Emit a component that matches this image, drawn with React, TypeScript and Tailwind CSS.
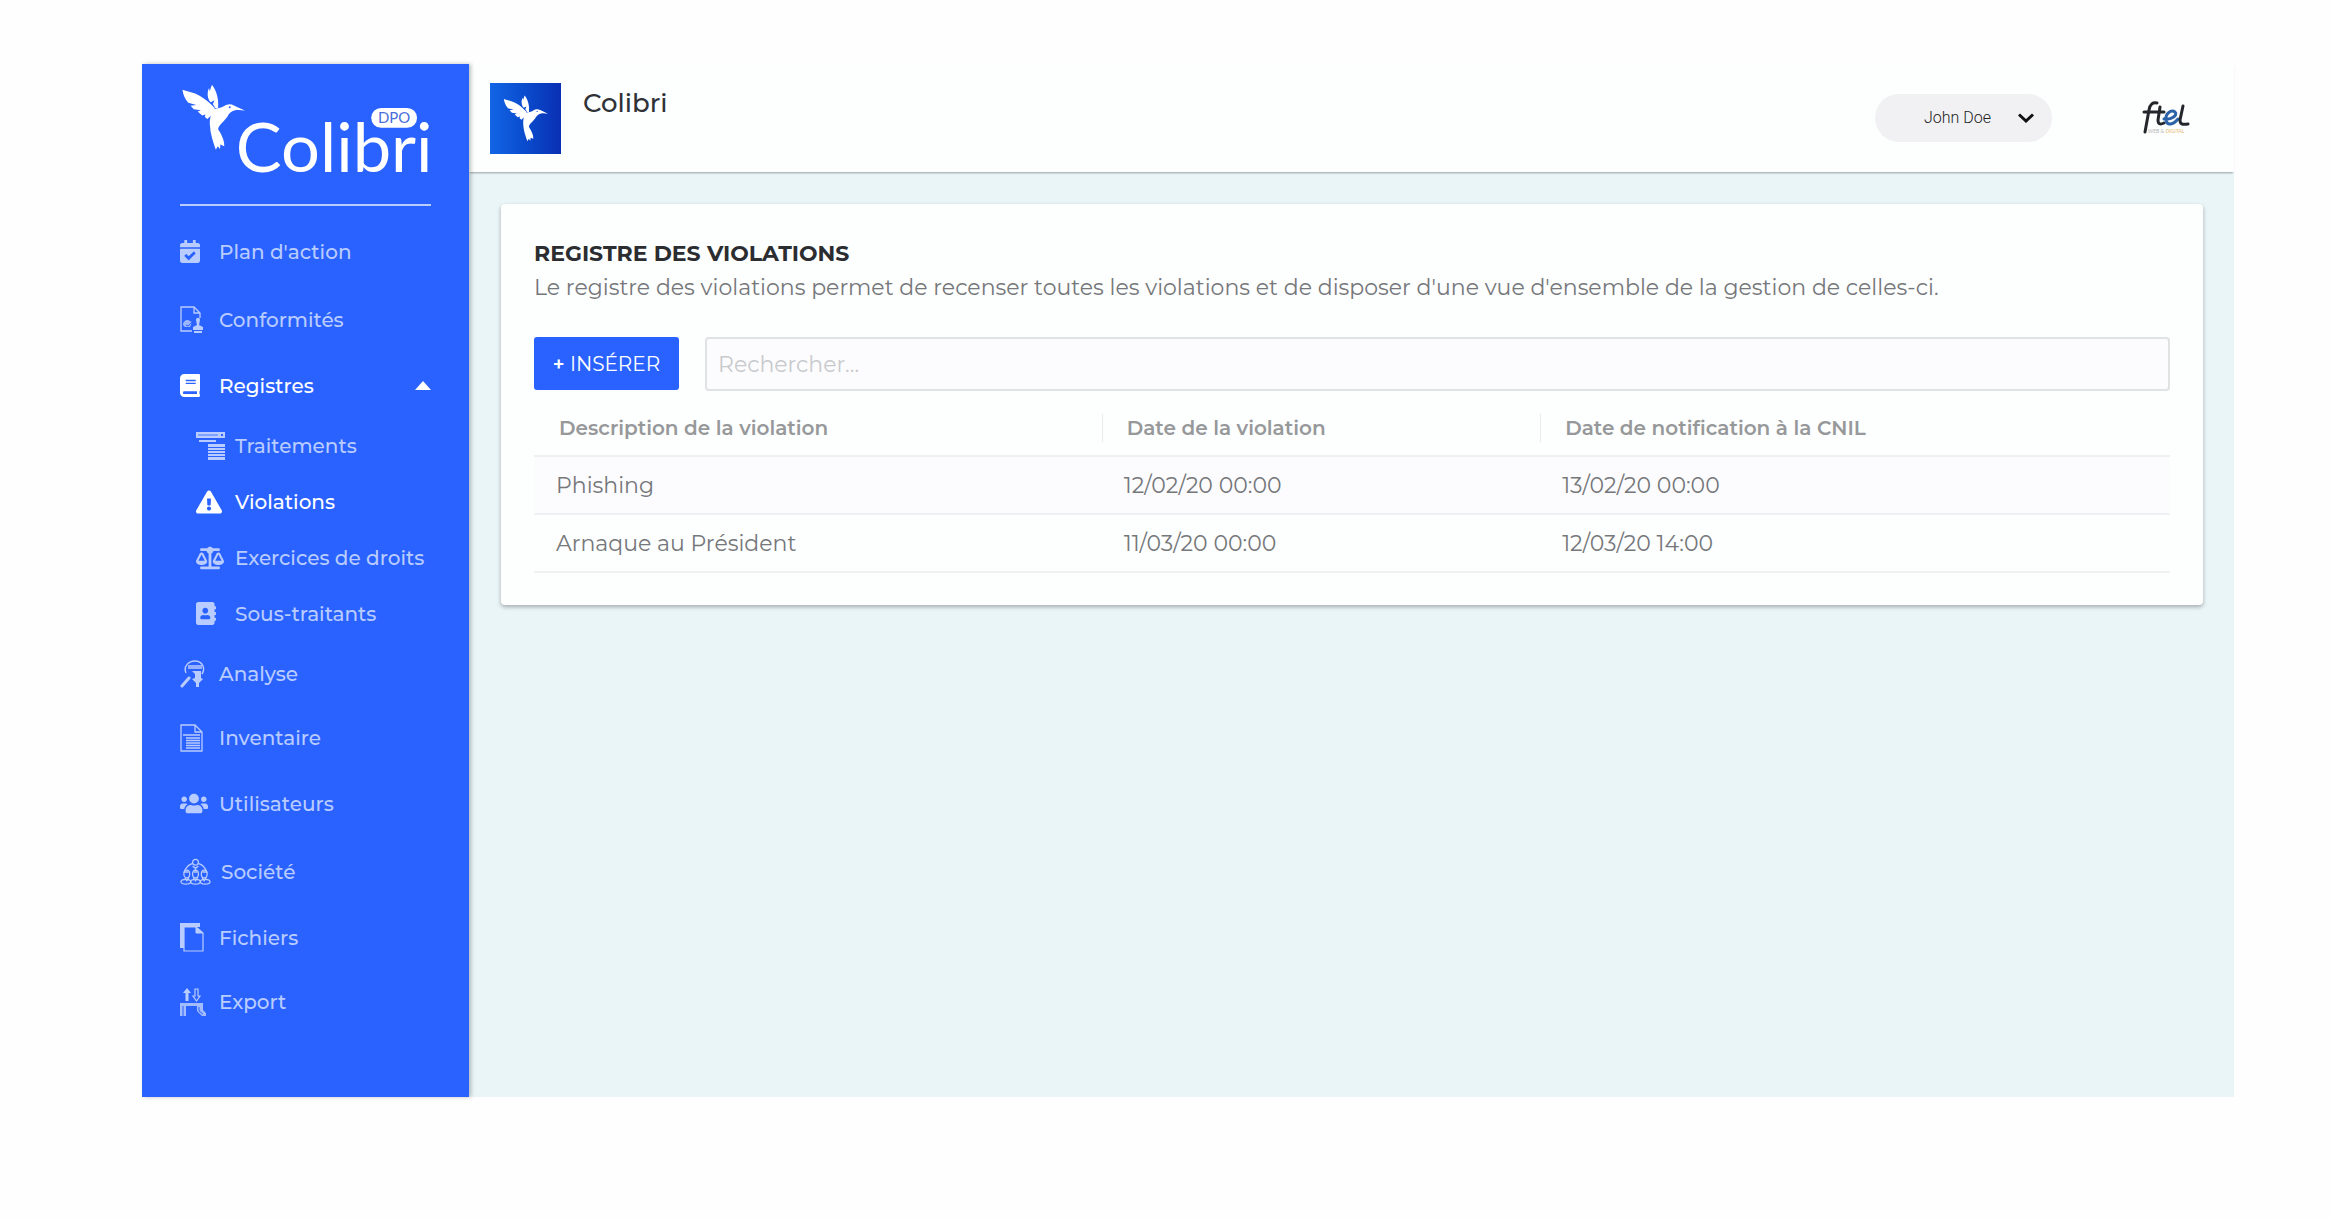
import React, { useState } from 'react';
import {
  FaCalendarCheck,
  FaBook,
  FaExclamationTriangle,
  FaBalanceScale,
  FaAddressBook,
  FaUsers,
} from 'react-icons/fa';

interface Violation {
  id: number;
  description: string;
  date: string;
  notification: string;
}

interface NavItem {
  label: string;
  icon: React.ReactNode;
  height: string;
  active?: boolean;
}

const violations: Violation[] = [
  { id: 1, description: 'Phishing', date: '12/02/20 00:00', notification: '13/02/20 00:00' },
  { id: 2, description: 'Arnaque au Président', date: '11/03/20 00:00', notification: '12/03/20 14:00' },
];

const Bird = ({ className, ...rest }: React.SVGProps<SVGSVGElement>) => (
  <svg viewBox="26 16 196 206" className={className} fill="#fff" aria-hidden="true" {...rest}>
    <path d="M27 34C44 40 62 42 80 52C98 62 114 76 127 91L119 110L104 124L96 118L98 110L88 113L74 101L84 97L62 94L52 83L70 81L45 74C34 62 29 48 27 34Z" />
    <path d="M118 18C132 34 140 64 137 90L129 91L121 78L126 66L114 72C104 62 102 42 109 28L111 38Z" />
    <path d="M220 98C208 92 196 87 186 82C176 76 164 78 156 84C146 91 134 90 125 94C114 108 110 126 112 146C113 170 122 196 130 219L136 208L143 217L144 203L156 208C157 192 148 172 137 156C138 142 156 132 166 116C171 105 180 99 190 97C200 95 210 97 220 98Z" />
    <circle cx="173" cy="88" r="3" fill="#2962ff" />
  </svg>
);

const Logo = () => (
  <svg viewBox="0 0 252 92" className="w-full overflow-visible" role="img" aria-label="Colibri DPO">
    <Bird x="1" y="0" width="66" height="67" />
    <text x="56" y="88" fontFamily="Lato, sans-serif" fontSize="69" fill="#fff">Colibri</text>
    <rect x="190" y="22" width="50" height="24" rx="12" fill="#2962ff" />
    <rect x="192" y="24" width="46" height="20" rx="10" fill="#fff" />
    <text x="215" y="39" textAnchor="middle" fontFamily="Lato, sans-serif" fontSize="15" fill="#4a6fdc">DPO</text>
  </svg>
);

const FtelLogo = () => (
  <svg viewBox="0 0 48 34" className="h-[34px] w-12" role="img" aria-label="ftel">
    <g fill="none" strokeLinecap="round" strokeLinejoin="round" strokeWidth="3">
      <path d="M3 31L7 9C8 3 11 1 15 2M2 11H22M18 6L16 19C16 23 18 24 22 22" stroke="#23262b" />
      <path d="M22 18C30 19 36 14 33 11C29 8 23 13 24 19C25 25 31 24 36 18" stroke="#2b62a8" />
      <path d="M41 5L38 19C38 23 40 24 46 23" stroke="#23262b" />
    </g>
    <text x="6" y="32" fontFamily="Lato, sans-serif" fontSize="5" fill="#b5b5b5">WEB &amp; <tspan fill="#e5b76a">DIGITAL</tspan></text>
  </svg>
);

const ConformitesIcon = () => (
  <svg viewBox="0 0 23 28" className="h-7 w-[23px]" fill="none" stroke="currentColor">
    <path d="M12 25H1V1H14L20 7V12M14 1V7H20" strokeWidth="1.3" />
    <path d="M3 19C3 16 5 14 8 14L12 16L10 21H5Z" fill="currentColor" stroke="none" opacity="0.8" />
    <path d="M6 19L8 20L12 16" strokeWidth="1" stroke="#2962ff" />
    <path d="M16 14C16 11 20 11 20 14L19 19L23 21V24H13V21L17 19ZM14 25H22V27H14Z" fill="currentColor" stroke="none" />
  </svg>
);

const TraitementsIcon = () => (
  <svg viewBox="0 0 29 28" className="h-7 w-[29px]" fill="currentColor">
    <path fillRule="evenodd" d="M0 0H29V6H0ZM2 2V4H22V2ZM25 2V4H27V2Z" />
    <path d="M2 2H22V4H2Z" opacity="0.6" />
    <path d="M3 8H20V10H3ZM12 12H29V15H12ZM12 16H29V18H12ZM12 19H29V21H12ZM12 22H29V24H12ZM12 25H29V28H12Z" />
  </svg>
);

const AnalyseIcon = () => (
  <svg viewBox="0 0 25 28" className="h-7 w-[25px]" fill="none" stroke="currentColor">
    <path d="M6 13C3 6 9 1 15 1C22 1 26 8 22 14" strokeWidth="1.4" />
    <path d="M8 6H22M8 8H22" strokeWidth="1.6" />
    <path d="M12 11H21V18L23 19L19 23V27H16V23L12 19L15 18V14Z" fill="currentColor" stroke="none" />
    <path d="M9 18L2 26" strokeWidth="3" strokeLinecap="round" />
  </svg>
);

const InventaireIcon = () => (
  <svg viewBox="0 0 23 28" className="h-7 w-[23px]" fill="none" stroke="currentColor">
    <path d="M1 1H15L22 8V27H1ZM15 1V8H22" strokeWidth="1.3" />
    <path d="M3 11H20M6 14H20M6 16.500H20M6 19H20M6 21.500H20M6 24H20" strokeWidth="1.7" />
  </svg>
);

const SocieteIcon = () => (
  <svg viewBox="0 0 32 28" className="h-7 w-[31px]" fill="none" stroke="currentColor" strokeWidth="1.3">
    <circle cx="16" cy="4" r="3" />
    <path d="M13 5C7 7 5 11 4 15M19 5C25 7 27 11 28 15M13 8L16 10L19 8" />
    <ellipse cx="7" cy="16" rx="3" ry="4" />
    <ellipse cx="16" cy="16" rx="3" ry="4" />
    <ellipse cx="25" cy="16" rx="3" ry="4" />
    <path d="M5 14H9M14 14H18M23 14H27M16 10V13M5 20L7 23L9 20M14 20L16 23L18 20M23 20L25 23L27 20" />
    <ellipse cx="6" cy="24" rx="5" ry="2.500" />
    <ellipse cx="16" cy="24" rx="5" ry="2.500" />
    <ellipse cx="26" cy="24" rx="5" ry="2.500" />
  </svg>
);

const FichiersIcon = () => (
  <svg viewBox="0 0 24 29" className="h-[29px] w-6" fill="none" stroke="currentColor">
    <path d="M0 0H20V4H4V25H0Z" fill="currentColor" stroke="none" />
    <path d="M4 4H16L23 10V28H4Z" strokeWidth="1.2" />
    <path d="M16 4V10H23Z" fill="currentColor" strokeWidth="1" />
  </svg>
);

const ExportIcon = () => (
  <svg viewBox="0 0 26 28" className="h-7 w-[26px]" fill="currentColor">
    <path d="M7 0L11 5H8.500V13H5.500V5H3Z" />
    <path d="M15 1H18V8H20L16.500 13L13 8H15Z" fill="none" stroke="currentColor" strokeWidth="1.200" />
    <path d="M0 15H23V22L26 25V28H22L17 23V18H6V28H0Z" opacity="0.85" />
    <path d="M3 18V28M19 19V23L23 26" stroke="#2962ff" strokeWidth="1" fill="none" />
  </svg>
);

const mainItems: NavItem[] = [
  { label: "Plan d'action", icon: <FaCalendarCheck className="h-[23px] w-5" />, height: 'h-[68px]' },
  { label: 'Conformités', icon: <ConformitesIcon />, height: 'h-[68px]' },
];

const registreItems: NavItem[] = [
  { label: 'Traitements', icon: <TraitementsIcon />, height: 'h-14' },
  { label: 'Violations', icon: <FaExclamationTriangle className="h-6 w-[26px]" />, height: 'h-14', active: true },
  { label: 'Exercices de droits', icon: <FaBalanceScale className="h-6 w-7" />, height: 'h-14' },
  { label: 'Sous-traitants', icon: <FaAddressBook className="h-[23px] w-5" />, height: 'h-14' },
];

const otherItems: NavItem[] = [
  { label: 'Analyse', icon: <AnalyseIcon />, height: 'h-16' },
  { label: 'Inventaire', icon: <InventaireIcon />, height: 'h-16' },
  { label: 'Utilisateurs', icon: <FaUsers className="h-[23px] w-7" />, height: 'h-[68px]' },
  { label: 'Société', icon: <SocieteIcon />, height: 'h-[68px]' },
  { label: 'Fichiers', icon: <FichiersIcon />, height: 'h-16' },
  { label: 'Export', icon: <ExportIcon />, height: 'h-16' },
];

const NavLink = ({ item }: { item: NavItem }) => (
  <li>
    <a
      href="#"
      className={`flex items-center whitespace-nowrap ${item.height} ${item.active ? 'text-white' : 'text-[#b9ccff] hover:text-white'}`}
    >
      <span className="flex min-w-[39px] shrink-0 pr-[10px]">{item.icon}</span>
      <span>{item.label}</span>
    </a>
  </li>
);

const Sidebar = () => {
  const [open, setOpen] = useState(true);

  return (
    <aside className="z-10 w-[327px] shrink-0 bg-[#2962ff] pr-[38px] pl-[38px] pt-5 shadow-[2px_0_4px_rgba(0,0,0,0.25)]">
      <Logo />
      <hr className="mt-7 border-t-2 border-[#b9ccff]" />
      <nav className="mt-3 text-[20px] font-medium">
        <ul>
          {mainItems.map((item) => (
            <NavLink key={item.label} item={item} />
          ))}
          <li>
            <button
              type="button"
              aria-expanded={open}
              onClick={() => setOpen(!open)}
              className="flex h-16 w-full items-center text-white"
            >
              <span className="flex min-w-[39px] shrink-0 pr-[10px]">
                <FaBook className="h-[23px] w-5" />
              </span>
              <span>Registres</span>
              <svg viewBox="0 0 16 9" className={`ml-auto h-[9px] w-4 ${open ? '' : 'rotate-180'}`} fill="currentColor">
                <path d="M8 0L16 9H0Z" />
              </svg>
            </button>
            {open && (
              <ul className="pl-4">
                {registreItems.map((item) => (
                  <NavLink key={item.label} item={item} />
                ))}
              </ul>
            )}
          </li>
          {otherItems.map((item) => (
            <NavLink key={item.label} item={item} />
          ))}
        </ul>
      </nav>
    </aside>
  );
};

const Header = () => (
  <header className="flex h-[108px] items-center bg-[#fdfefe] pr-11 pl-[21px] shadow-[0_2px_2px_-1px_rgba(0,0,0,0.35)]">
    <div className="flex h-[71px] w-[71px] items-center justify-center bg-linear-to-r from-[#1265e6] to-[#0a2fb4]">
      <Bird className="h-[47px] w-[46px]" />
    </div>
    <h1 className="mb-[30px] ml-[22px] text-[26px] leading-9 font-medium text-[#2f3237]">Colibri</h1>
    <div className="relative ml-auto">
      <select
        aria-label="Utilisateur"
        className="h-12 w-[177px] appearance-none rounded-full bg-[#f1f1f4] pl-[49px] font-[Roboto] text-[16px] font-light text-[#222]"
      >
        <option>John Doe</option>
      </select>
      <svg viewBox="0 0 16 10" className="pointer-events-none absolute top-[19px] right-[18px] h-[10px] w-4" fill="none" stroke="#111" strokeWidth="3">
        <path d="M1 1.500L8 8L15 1.500" />
      </svg>
    </div>
    <div className="ml-[90px]">
      <FtelLogo />
    </div>
  </header>
);

export default function App() {
  const [search, setSearch] = useState('');

  const rows = violations.filter((v) => v.description.toLowerCase().includes(search.toLowerCase()));

  return (
    <div className="flex min-h-screen bg-[#fefefe] pt-16 pr-24 pb-[124px] pl-[142px] font-[Montserrat,Inter,sans-serif]">
      <Sidebar />
      <div className="flex min-w-0 flex-1 flex-col bg-[#eaf5f8]">
        <Header />
        <main className="px-8 pt-8 pr-[31px]">
          <section className="rounded-[4px] bg-[#fdfefe] p-[33px] pb-8 shadow-[0_2px_4px_rgba(0,0,0,0.3)]">
            <h2 className="text-[22px] leading-[34px] font-bold text-[#2b2d31]">REGISTRE DES VIOLATIONS</h2>
            <p className="text-[22px] leading-[34px] text-[#75777a]">
              Le registre des violations permet de recenser toutes les violations et de disposer d'une vue d'ensemble de la gestion de celles-ci.
            </p>

            <div className="mt-8 flex gap-[26px]">
              <button
                type="button"
                className="h-[53px] w-[145px] shrink-0 rounded-[3px] bg-[#2962ff] text-[20px] text-white hover:bg-[#1e54e6]"
              >
                <span className="font-semibold">+</span> INSÉRER
              </button>
              <input
                type="text"
                aria-label="Rechercher"
                placeholder="Rechercher..."
                value={search}
                onChange={(e) => setSearch(e.target.value)}
                className="h-[54px] min-w-0 flex-1 rounded-[4px] border-2 border-[#e0e2e4] bg-[#fcfcfe] px-[11px] text-[22px] text-[#75777a] outline-none placeholder:text-[#c8cacc]"
              />
            </div>

            <table className="mt-[9px] w-full table-fixed text-left">
              <thead className="text-[20px] leading-7 text-[#96989a]">
                <tr className="border-b-2 border-[#eef0f2]">
                  <th className="h-14 w-[34.7%] px-[25px] font-semibold">Description de la violation</th>
                  <th className="w-[26.8%] font-semibold">
                    <div className="border-l border-[#e9ebee] pl-6">Date de la violation</div>
                  </th>
                  <th className="font-semibold">
                    <div className="border-l border-[#e9ebee] pl-6">Date de notification à la CNIL</div>
                  </th>
                </tr>
              </thead>
              <tbody className="text-[22px] text-[#75777a]">
                {rows.map((v) => (
                  <tr key={v.id} className="border-b-2 border-[#eef0f2] odd:bg-[#fcfcfe]">
                    <td className="h-[58px] px-[22px]">{v.description}</td>
                    <td className="px-[22px]">{v.date}</td>
                    <td className="px-[22px]">{v.notification}</td>
                  </tr>
                ))}
              </tbody>
            </table>
          </section>
        </main>
      </div>
    </div>
  );
}
